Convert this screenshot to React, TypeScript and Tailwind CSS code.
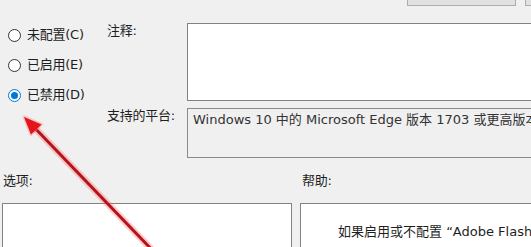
const options = [
  { label: '未配置(C)', checked: false },
  { label: '已启用(E)', checked: false },
  { label: '已禁用(D)', checked: true },
];

const Radio = ({ checked }: { checked: boolean }) => (
  <span
    className={`flex h-[13px] w-[13px] shrink-0 items-center justify-center rounded-full border bg-white ${
      checked ? 'border-[#0078d7]' : 'border-[#333333]'
    }`}
  >
    {checked && <span className="h-[7px] w-[7px] rounded-full bg-[#0078d7]" />}
  </span>
);

const Arrow = () => (
  <svg
    className="pointer-events-none absolute left-0 top-0"
    width="531"
    height="247"
    viewBox="0 0 531 247"
  >
    <line x1="31" y1="124" x2="156" y2="254" stroke="#ff6b6b" strokeOpacity="0.35" strokeWidth="7" strokeLinecap="round" />
    <line x1="31" y1="124" x2="156" y2="254" stroke="#b3141c" strokeWidth="3" />
    <polygon points="24,117 31,134.5 41.5,124.5" fill="#ff7070" fillOpacity="0.4" stroke="#ff7070" strokeOpacity="0.35" strokeWidth="3" strokeLinejoin="round" />
    <polygon points="24,117 31,134.5 41.5,124.5" fill="#e3141c" />
  </svg>
);

export default function App() {
  return (
    <div className="relative h-[247px] w-[531px] overflow-hidden bg-[#f0f0f0] font-['DejaVu_Sans','Noto_Sans_CJK_SC',sans-serif] text-[13px] tracking-[-0.25px] text-[#1e1e1e]">
      <div className="flex h-[6px] items-end">
        <div className="ml-[407px] h-[6px] w-[109px] shrink-0 border border-t-0 border-[#adadad] bg-[#e1e1e1]" />
        <div className="ml-[9px] h-[6px] w-[40px] shrink-0 border border-t-0 border-[#adadad] bg-[#e1e1e1]" />
      </div>

      <div className="mt-[14px] flex">
        <div className="flex w-[107px] shrink-0 flex-col">
          {options.map((o) => (
            <div key={o.label} className="flex h-[30px] items-center gap-[6px] whitespace-nowrap pl-[8px]">
              <Radio checked={o.checked} />
              <span className="leading-[16px]">{o.label}</span>
            </div>
          ))}
        </div>

        <div className="grid shrink-0 grid-cols-[80px_400px] gap-y-[7px] pt-[3px]">
          <div className="leading-[16px]">注释:</div>
          <div className="h-[78px] border border-[#828282] bg-white" />
          <div className="leading-[16px]">支持的平台:</div>
          <div className="h-[50px] whitespace-nowrap border border-[#8a8a8a] bg-[#f0f0f0] px-[5px] pt-[1px] leading-[20px] tracking-normal text-[#333333]">
            Windows 10 中的 Microsoft Edge 版本 1703 或更高版本
          </div>
        </div>
      </div>

      <div className="mt-[15px] flex leading-[16px]">
        <div className="w-[299px] shrink-0 pl-[3px]">选项:</div>
        <div className="pl-[3px]">帮助:</div>
      </div>

      <div className="mt-[14px] flex">
        <div className="ml-[2px] h-[60px] w-[290px] shrink-0 border border-[#828282] bg-white" />
        <div className="ml-[8px] h-[60px] w-[260px] shrink-0 whitespace-nowrap border border-[#828282] bg-white pl-[37px] pt-[19px] leading-[18px] tracking-normal">
          如果启用或不配置 “Adobe Flash”设置，Microsoft Edge 会
        </div>
      </div>

      <Arrow />
    </div>
  );
}
